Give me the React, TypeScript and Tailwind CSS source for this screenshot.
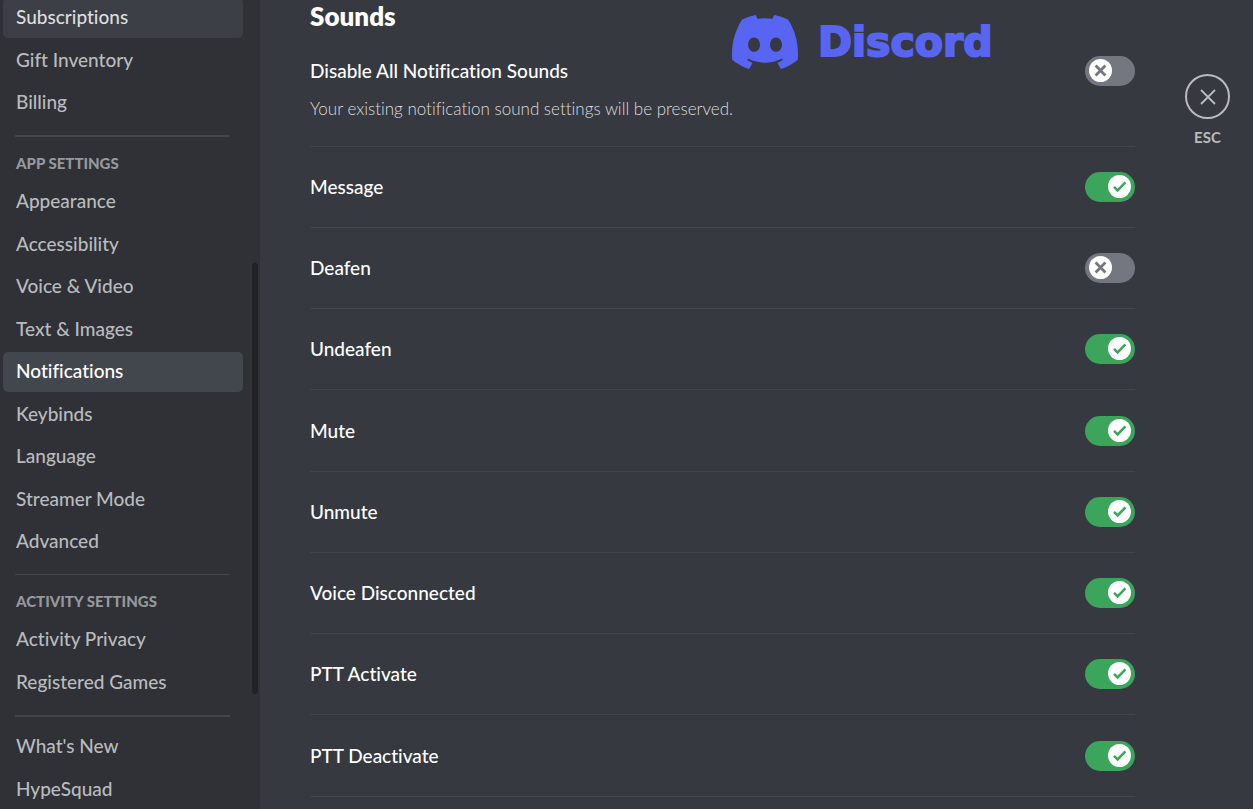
import React, { useState } from 'react';
import { SiDiscord } from 'react-icons/si';

interface NavGroup {
  title?: string;
  items: string[];
}

interface SoundSetting {
  id: string;
  label: string;
  enabled: boolean;
}

const NAV_GROUPS: NavGroup[] = [
  { items: ['Subscriptions', 'Gift Inventory', 'Billing'] },
  {
    title: 'App Settings',
    items: [
      'Appearance',
      'Accessibility',
      'Voice & Video',
      'Text & Images',
      'Notifications',
      'Keybinds',
      'Language',
      'Streamer Mode',
      'Advanced',
    ],
  },
  { title: 'Activity Settings', items: ['Activity Privacy', 'Registered Games'] },
  { items: ["What's New", 'HypeSquad'] },
];

const SOUND_SETTINGS: SoundSetting[] = [
  { id: 'message', label: 'Message', enabled: true },
  { id: 'deafen', label: 'Deafen', enabled: false },
  { id: 'undeafen', label: 'Undeafen', enabled: true },
  { id: 'mute', label: 'Mute', enabled: true },
  { id: 'unmute', label: 'Unmute', enabled: true },
  { id: 'voice-disconnected', label: 'Voice Disconnected', enabled: true },
  { id: 'ptt-activate', label: 'PTT Activate', enabled: true },
  { id: 'ptt-deactivate', label: 'PTT Deactivate', enabled: true },
];

/**
 * Single sidebar entry
 */
const NavItem: React.FC<{ label: string; state: 'idle' | 'hovered' | 'selected' }> = ({
  label,
  state,
}) => {
  const colors = {
    idle: 'text-[#b9bbbe] hover:bg-[#3c3f45]',
    hovered: 'bg-[#3c3f45] text-[#dcddde]',
    selected: 'bg-[#42464d] text-white',
  };

  return (
    <li className="odd:mb-[3px] even:mb-[2px] last:mb-0">
      <a
        href="#"
        aria-current={state === 'selected' ? 'page' : undefined}
        className={`flex h-10 items-center rounded-[5px] px-[13px] pb-0.5 text-[19px] font-medium ${colors[state]}`}
      >
        {label}
      </a>
    </li>
  );
};

/**
 * Scrolled settings navigation with its scrollbar thumb
 */
const Sidebar: React.FC = () => {
  const stateOf = (item: string) => {
    if (item === 'Notifications') return 'selected';
    if (item === 'Subscriptions') return 'hovered';
    return 'idle';
  };

  return (
    <aside className="flex w-[260px] shrink-0 justify-between bg-[#2f3136] pr-0.5 pl-[3px]">
      <nav className="-mt-0.5 w-60">
        {NAV_GROUPS.map((group, i) => (
          <section key={group.items[0]}>
            {i > 0 && (
              <hr
                className={`mt-3 mr-[13px] ml-3 border-0 bg-[#42454a] ${i === 2 ? 'h-px' : 'h-0.5'}`}
              />
            )}
            {group.title && (
              <h2 className="px-[13px] pt-4 pb-[9px] text-[15px] leading-5 font-black text-[#96989d] uppercase">
                {group.title}
              </h2>
            )}
            <ul className={i === 3 ? 'pt-2.5' : ''}>
              {group.items.map((item) => (
                <NavItem key={item} label={item} state={stateOf(item)} />
              ))}
            </ul>
          </section>
        ))}
      </nav>
      <div className="mt-[263px] h-[431px] w-1.5 rounded-full bg-[#202225]" />
    </aside>
  );
};

/**
 * Toggle switch - the knob sits in the same grid cell as the checkbox
 */
const Toggle: React.FC<{ id: string; checked: boolean; onChange: () => void }> = ({
  id,
  checked,
  onChange,
}) => (
  <span className="grid shrink-0 items-center">
    <input
      id={id}
      type="checkbox"
      role="switch"
      checked={checked}
      onChange={onChange}
      className="col-start-1 row-start-1 h-[30px] w-[50px] cursor-pointer appearance-none rounded-full bg-[#74777f] checked:bg-[#3ba55c]"
    />
    <svg
      viewBox="0 0 23 23"
      fill="none"
      className={`pointer-events-none col-start-1 row-start-1 mx-1 mb-px h-[23px] w-[23px] ${
        checked ? 'justify-self-end text-[#3ba55c]' : 'text-[#74777f]'
      }`}
    >
      <circle cx="11.5" cy="11.5" r="11.5" fill="white" />
      {checked ? (
        <path d="M6 11.8L9.6 15.4L17.4 7.4" stroke="currentColor" strokeWidth="2.5" />
      ) : (
        <path d="M6.6 6.6L16.4 16.4M16.4 6.6L6.6 16.4" stroke="currentColor" strokeWidth="2.8" />
      )}
    </svg>
  </span>
);

const Brand: React.FC = () => (
  <div className="pointer-events-none absolute top-[15px] left-[472px] flex items-center gap-5 text-[#5865f2]">
    <SiDiscord
      viewBox="0 2.85 24 18.3"
      preserveAspectRatio="none"
      className="h-[54px] w-[66px]"
    />
    <span className="font-['DejaVu_Sans',sans-serif] text-[41px] leading-[54px] font-bold [-webkit-text-stroke:2px_#5865f2]">
      Discord
    </span>
  </div>
);

const App: React.FC = () => {
  const [disableAll, setDisableAll] = useState(false);
  const [sounds, setSounds] = useState(SOUND_SETTINGS);

  const toggleSound = (id: string) =>
    setSounds((prev) => prev.map((s) => (s.id === id ? { ...s, enabled: !s.enabled } : s)));

  return (
    <div className="flex h-screen overflow-hidden bg-[#36393f] font-['Lato',sans-serif] text-white [font-variant-ligatures:none]">
      <Sidebar />

      <main className="relative min-w-0 flex-1 pl-[50px]">
        <h1 className="h-14 text-[26px] leading-8 font-extrabold">Sounds</h1>

        {/* Master switch */}
        <div className="h-[91px] border-b border-[#42454a]">
          <div className="flex items-center justify-between">
            <label htmlFor="disable-all" className="text-[19px] leading-[30px] font-medium">
              Disable All Notification Sounds
            </label>
            <Toggle
              id="disable-all"
              checked={disableAll}
              onChange={() => setDisableAll(!disableAll)}
            />
          </div>
          <p className="mt-[11px] text-[17px] leading-6 font-light text-[#dcddde]">
            Your existing notification sound settings will be preserved.
          </p>
        </div>

        {/* Individual sounds */}
        <ul>
          {sounds.map((sound) => (
            <li
              key={sound.id}
              className="flex items-center justify-between border-b border-[#42454a] py-[25px] nth-[4n]:pt-[26px]"
            >
              <label htmlFor={sound.id} className="text-[19px] leading-[30px] font-medium">
                {sound.label}
              </label>
              <Toggle
                id={sound.id}
                checked={sound.enabled}
                onChange={() => toggleSound(sound.id)}
              />
            </li>
          ))}
        </ul>

        <Brand />
      </main>

      <div className="flex w-[118px] shrink-0 flex-col items-center pt-[74px] pr-[23px] pl-[50px]">
        <button
          type="button"
          aria-label="Close settings"
          className="flex h-[45px] w-[45px] cursor-pointer items-center justify-center rounded-full border-2 border-[#b9bbbe] text-[#b9bbbe]"
        >
          <svg viewBox="0 0 16 16" className="h-4 w-4" stroke="currentColor" strokeWidth="1.8">
            <path d="M1 1L15 15M15 1L1 15" />
          </svg>
        </button>
        <span className="mt-2 text-[15px] leading-5 font-bold text-[#b9bbbe]">ESC</span>
      </div>
    </div>
  );
};

export default App;
